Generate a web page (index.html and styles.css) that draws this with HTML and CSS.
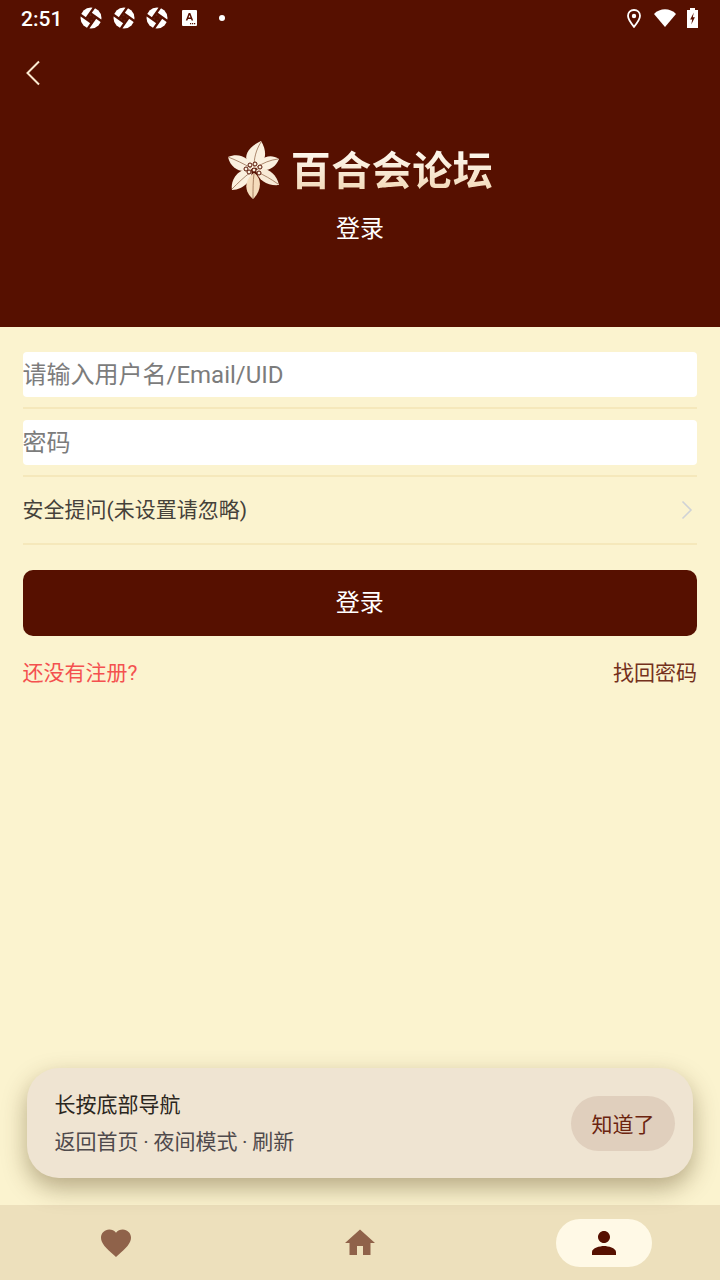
FILE: index.html
```html
<!DOCTYPE html>
<html>
<head>
  <meta charset="utf-8">
  <link rel="stylesheet" href="styles.css">
  <title>登录</title>
</head>
<body>
  <svg class="defs" width="0" height="0">
    <symbol id="shutter" viewBox="0 0 22 22">
      <circle cx="11" cy="11" r="10.5" fill="#fff"/>
      <g stroke="#561000" stroke-width="2.4" fill="none">
        <path d="M7.5 -1 L7.5 15" transform="rotate(35 11 11)"/>
        <path d="M7.5 -1 L7.5 15" transform="rotate(125 11 11)"/>
        <path d="M7.5 -1 L7.5 15" transform="rotate(215 11 11)"/>
        <path d="M7.5 -1 L7.5 15" transform="rotate(305 11 11)"/>
      </g>
      <circle cx="11" cy="11" r="3" fill="#561000"/>
    </symbol>
  </svg>

  <div class="page">
    <header class="header">
      <div class="status-bar">
        <span class="time">2:51</span>
        <div class="status-left">
          <svg class="shutter"><use href="#shutter"/></svg>
          <svg class="shutter"><use href="#shutter"/></svg>
          <svg class="shutter"><use href="#shutter"/></svg>
          <svg class="a-icon" viewBox="0 0 15 16"><rect width="15" height="16" rx="1" fill="#fff"/><path d="M3.8 10.5 L6.7 3 H8.3 L11.2 10.5 H9.6 L9 8.9 H6 L5.4 10.5 Z M6.5 7.6 H8.5 L7.5 4.9 Z" fill="#561000" fill-rule="evenodd"/><path d="M8 13 h1.2 v1.2 h-1.2z M10 13 h1.2 v1.2 h-1.2z M12 13 h1.2 v1.2 h-1.2z" fill="#561000"/></svg>
          <span class="dot"></span>
        </div>
        <div class="status-right">
          <svg class="pin" viewBox="0 0 14 19"><path d="M7 1 C3.4 1 1 3.6 1 6.8 C1 10.6 5 15.4 7 17.8 C9 15.4 13 10.6 13 6.8 C13 3.6 10.6 1 7 1 Z" fill="none" stroke="#fff" stroke-width="1.8"/><circle cx="7" cy="7" r="2.2" fill="#fff"/></svg>
          <svg class="wifi" viewBox="0 0 22 18"><path d="M0 5 C6 -1.2 16 -1.2 22 5 L11 18 Z" fill="#fff"/></svg>
          <svg class="battery" viewBox="0 0 11 20"><path d="M3 0 H8 V2 H11 V20 H0 V2 H3 Z" fill="#fff"/><path d="M6.8 4.5 L3.2 11.4 H5.2 L4.3 16.4 L7.9 9.2 H5.8 Z" fill="#561000"/></svg>
        </div>
      </div>

      <button class="back-btn">
        <svg viewBox="0 0 16 26" width="16" height="26"><path d="M14 1.5 L2.5 13 L14 24.5" fill="none" stroke="#fbe9cf" stroke-width="2"/></svg>
      </button>

      <div class="brand">
        <svg class="lily" viewBox="0 0 66 68">
          <g fill="#fbf0df">
            <path d="M29 32 C21 26 19 14 38 5 C45 16 43 28 32 32 Z"/>
            <path d="M33 32 C35 23 46 16 56 23 C52 33 42 37 33 32 Z"/>
            <path d="M5 21 C16 16 28 22 29 33 C20 38 8 34 5 21 Z"/>
            <path d="M33 34 C42 30 53 36 56 49 C45 50 35 45 33 34 Z" fill="#f8ead6"/>
            <path d="M28 34 C31 42 21 54 9 54 C7 44 16 31 28 34 Z"/>
            <path d="M31 37 C40 43 38 56 30 63 C20 55 22 43 31 37 Z" fill="#f5dcbc"/>
          </g>
          <g fill="none" stroke="#8a5a3c" stroke-width="0.7">
            <path d="M38 6 C33 14 31 22 31 31"/>
            <path d="M55 23 C47 24 40 27 34 31"/>
            <path d="M5 21 C13 24 21 28 28 32"/>
            <path d="M55 48 C48 43 41 39 34 36"/>
            <path d="M9 53 C15 47 21 41 28 36"/>
            <path d="M30 62 C30 53 30 45 31 38"/>
          </g>
          <g fill="#fbf0df" stroke="#561000" stroke-width="1">
            <circle cx="23" cy="33" r="2"/><circle cx="27" cy="29" r="2"/><circle cx="32" cy="28" r="2"/><circle cx="37" cy="31" r="2"/><circle cx="26" cy="36" r="2"/><circle cx="31" cy="34" r="2"/><circle cx="36" cy="37" r="2"/>
          </g>
        </svg>
        <span class="brand-name">百合会论坛</span>
      </div>
      <h1 class="title">登录</h1>
    </header>

    <main class="form">
      <div class="field">
        <input class="text-input" type="text" placeholder="请输入用户名/Email/UID">
      </div>
      <div class="field">
        <input class="text-input" type="password" placeholder="密码">
      </div>
      <div class="question-row">
        <span>安全提问(未设置请忽略)</span>
        <svg viewBox="0 0 12 20" width="12" height="20"><path d="M1.5 1.5 L10 10 L1.5 18.5" fill="none" stroke="#cfd2d6" stroke-width="1.6"/></svg>
      </div>
      <button class="login-btn">登录</button>
      <div class="links">
        <a class="link-register">还没有注册?</a>
        <a class="link-forgot">找回密码</a>
      </div>
    </main>

    <div class="toast">
      <div class="toast-text">
        <p class="toast-title">长按底部导航</p>
        <p class="toast-desc">返回首页 · 夜间模式 · 刷新</p>
      </div>
      <button class="toast-btn">知道了</button>
    </div>

    <nav class="bottom-nav">
      <div class="nav-item">
        <svg viewBox="0 0 24 24" width="36" height="36"><path d="M12 21.35l-1.45-1.32C5.4 15.36 2 12.28 2 8.5 2 5.42 4.42 3 7.5 3c1.74 0 3.41.81 4.5 2.09C13.09 3.81 14.76 3 16.5 3 19.58 3 22 5.42 22 8.5c0 3.78-3.4 6.86-8.55 11.54L12 21.35z" fill="#8f624a"/></svg>
      </div>
      <div class="nav-item">
        <svg viewBox="0 0 24 24" width="36" height="36"><path d="M10 20v-6h4v6h5v-8h3L12 3 2 12h3v8z" fill="#8f624a"/></svg>
      </div>
      <div class="nav-item nav-pill">
        <svg viewBox="0 0 24 24" width="36" height="36"><path d="M12 12c2.21 0 4-1.79 4-4s-1.79-4-4-4-4 1.79-4 4 1.79 4 4 4zm0 2c-2.67 0-8 1.34-8 4v2h16v-2c0-2.66-5.33-4-8-4z" fill="#561000"/></svg>
      </div>
    </nav>
  </div>
</body>
</html>
```

FILE: styles.css
```css
* {
  box-sizing: border-box;
}

body {
  margin: 0;
  font-family: Roboto, "Noto Sans CJK SC", sans-serif;
  background-color: #fbf3cf;
}

p {
  margin: 0;
}

button {
  font-family: inherit;
  border: none;
  padding: 0;
}

.defs {
  display: block;
}

.page {
  position: relative;
  display: flex;
  flex-direction: column;
  width: 720px;
  height: 1280px;
  overflow: hidden;
}

/* header */
.header {
  height: 327px;
  flex-shrink: 0;
  background-color: #561000;
}

.status-bar {
  display: flex;
  align-items: center;
  height: 36px;
  padding: 0 22px 0 21px;
  color: #fff;
}

.time {
  width: 59px;
  padding-top: 2px;
  font-size: 21px;
  font-weight: 500;
}

.status-left {
  display: flex;
  align-items: center;
  gap: 11px;
  flex: 1;
}

.shutter {
  width: 22px;
  height: 22px;
}

.a-icon {
  width: 15px;
  height: 16px;
  margin-left: 3px;
}

.dot {
  width: 6px;
  height: 6px;
  margin-left: 11px;
  border-radius: 50%;
  background-color: #fff;
}

.status-right {
  display: flex;
  align-items: center;
}

.pin {
  width: 14px;
  height: 19px;
  margin-right: 13px;
}

.wifi {
  width: 22px;
  height: 18px;
  margin-right: 11px;
}

.battery {
  width: 11px;
  height: 20px;
}

.back-btn {
  display: block;
  height: 26px;
  margin: 24px 0 0 25px;
  background: none;
}

.brand {
  display: flex;
  justify-content: center;
  align-items: center;
  gap: 2px;
  height: 68px;
  margin-top: 50px;
  padding-right: 4px;
}

.lily {
  width: 66px;
  height: 68px;
}

.brand-name {
  margin-bottom: 5px;
  font-family: "Noto Sans CJK SC", sans-serif;
  font-size: 40px;
  font-weight: 700;
  letter-spacing: 0.5px;
  line-height: 48px;
  background: linear-gradient(#fffdf8, #f3d9b8);
  -webkit-background-clip: text;
  background-clip: text;
  color: transparent;
}

.title {
  margin: 8px 0 0;
  font-size: 24px;
  font-weight: 400;
  line-height: 34px;
  text-align: center;
  color: #fff;
}

/* form */
.form {
  flex: 1;
  padding: 25px 23px 0 22.5px;
}

.field {
  height: 57px;
  border-bottom: 2px solid #f5e8bb;
}

.field + .field {
  margin-top: 11px;
}

.text-input {
  display: block;
  width: 100%;
  height: 45px;
  padding: 0;
  border: none;
  border-radius: 4px;
  outline: none;
  background-color: #fff;
  font-family: inherit;
  font-size: 24px;
}

.text-input::placeholder {
  color: #7c7c7c;
  opacity: 1;
}

.question-row {
  display: flex;
  justify-content: space-between;
  align-items: center;
  height: 67.5px;
  padding-right: 4px;
  border-bottom: 2px solid #f5e8bb;
  font-size: 21px;
  color: #45413a;
}

.question-row span {
  padding-bottom: 3px;
}

.login-btn {
  display: block;
  width: 100%;
  height: 66px;
  margin-top: 25.5px;
  padding-bottom: 5px;
  border-radius: 10px;
  background-color: #561000;
  color: #fff;
  font-size: 24px;
}

.links {
  display: flex;
  justify-content: space-between;
  margin-top: 22px;
  font-size: 21px;
  line-height: 30px;
}

.link-register {
  color: #f4514f;
}

.link-forgot {
  color: #74301c;
}

/* tip over the page */
.toast {
  position: absolute;
  left: 27px;
  top: 1068px;
  display: flex;
  justify-content: space-between;
  align-items: center;
  width: 666px;
  height: 110px;
  padding: 0 18px 0 27.5px;
  border-radius: 32px;
  background-color: #efe4d2;
  box-shadow: 0 10px 24px rgba(70, 50, 10, 0.38);
}

.toast-text {
  padding-top: 2px;
}

.toast-title {
  font-size: 21px;
  line-height: 37px;
  color: #2b2620;
}

.toast-desc {
  font-size: 21px;
  line-height: 37px;
  color: #4f4a4c;
  word-spacing: -0.5px;
}

.toast-btn {
  width: 104px;
  height: 55px;
  border-radius: 28px;
  background-color: #e0cfbd;
  color: #6b2410;
  font-size: 21px;
}

/* bottom nav */
.bottom-nav {
  display: flex;
  justify-content: center;
  align-items: center;
  gap: 148px;
  height: 75px;
  flex-shrink: 0;
  background-color: #ede0bc;
}

.nav-item {
  display: flex;
  justify-content: center;
  align-items: center;
  width: 96px;
  height: 48px;
}

.nav-pill {
  border-radius: 24px;
  background-color: #fff9e6;
}
```
